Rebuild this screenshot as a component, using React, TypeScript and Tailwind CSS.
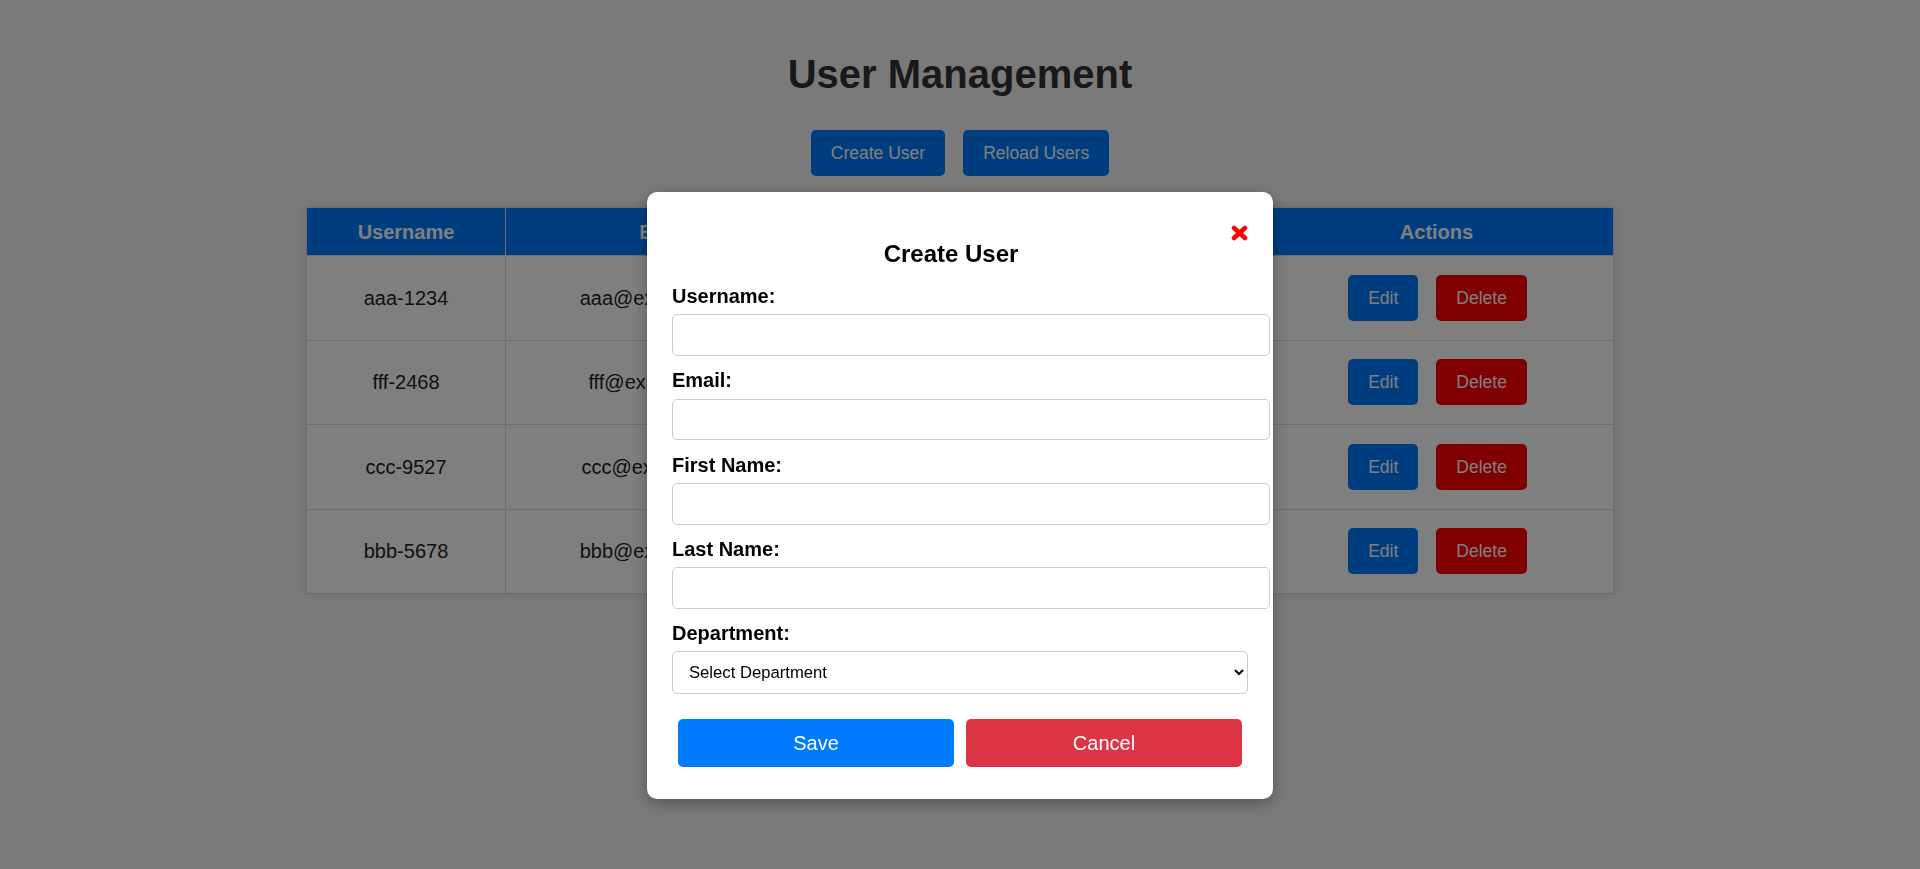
import React from "react";

const users = [
  { username: "aaa-1234", email: "aaa@example.com", first: "Aaa", last: "Smith", dept: "IT" },
  { username: "fff-2468", email: "fff@example.com", first: "Fff", last: "Jones", dept: "HR" },
  { username: "ccc-9527", email: "ccc@example.com", first: "Ccc", last: "Brown", dept: "Sales" },
  { username: "bbb-5678", email: "bbb@example.com", first: "Bbb", last: "Davis", dept: "IT" },
];

function Field({ label }: { label: string }) {
  return (
    <div className="mb-[13.3px]">
      <label className="block text-[20px] leading-[23px] font-bold text-black">{label}</label>
      <input
        type="text"
        className="block mt-[6.4px] h-[41.6px] w-[598px] px-[10px] border border-[#ccc] rounded-[5px] bg-white text-[16.67px]"
      />
    </div>
  );
}

export default function App() {
  return (
    <div className="relative min-h-screen bg-[#f4f4f4] font-['Liberation_Sans',Arial,sans-serif] text-[#333]">
      <div className="pt-[51px] flex flex-col items-center">
        <h1 className="text-[40px] leading-[46px] font-bold text-[#333]">User Management</h1>
        <div className="mt-[33px] flex gap-[18px]">
          <button className="h-[46px] px-[20px] rounded-[5px] bg-[#007bff] text-white text-[17.5px]">
            Create User
          </button>
          <button className="h-[46px] px-[20px] rounded-[5px] bg-[#007bff] text-white text-[17.5px]">
            Reload Users
          </button>
        </div>
        <table className="mt-[31px] w-[1307px] table-fixed border-collapse bg-white shadow-[0_0_10px_rgba(0,0,0,0.1)]">
          <colgroup>
            <col className="w-[199px]" />
            <col className="w-[321px]" />
            <col className="w-[144px]" />
            <col className="w-[144px]" />
            <col className="w-[145px]" />
            <col className="w-[354px]" />
          </colgroup>
          <thead>
            <tr className="h-[48px] bg-[#007bff] text-white text-[20px] font-bold">
              <th className="border border-[#ddd]">Username</th>
              <th className="border border-[#ddd]">Email</th>
              <th className="border border-[#ddd]">First Name</th>
              <th className="border border-[#ddd]">Last Name</th>
              <th className="border border-[#ddd]">Department</th>
              <th className="border border-[#ddd]">Actions</th>
            </tr>
          </thead>
          <tbody>
            {users.map((u) => (
              <tr key={u.username} className="h-[84.5px] text-[20px] text-center text-[#222]">
                <td className="border border-[#ddd]">{u.username}</td>
                <td className="border border-[#ddd]">{u.email}</td>
                <td className="border border-[#ddd]">{u.first}</td>
                <td className="border border-[#ddd]">{u.last}</td>
                <td className="border border-[#ddd]">{u.dept}</td>
                <td className="border border-[#ddd]">
                  <div className="flex justify-center gap-[18px] pl-[2px]">
                    <button className="h-[46px] px-[20px] rounded-[5px] bg-[#007bff] text-white text-[17.5px]">
                      Edit
                    </button>
                    <button className="h-[46px] px-[20px] rounded-[5px] bg-[#ff0000] text-white text-[17.5px]">
                      Delete
                    </button>
                  </div>
                </td>
              </tr>
            ))}
          </tbody>
        </table>
      </div>

      <div className="fixed inset-0 bg-black/50 flex justify-center items-start pt-[192px]">
        <div className="relative w-[626px] bg-white rounded-[10px] p-[25px] pb-[32px] shadow-[0_4px_16px_rgba(0,0,0,0.3)]">
          <button className="absolute right-[25px] top-[33px] w-[17px] h-[16px] flex items-center justify-center">
            <svg width="17" height="16" viewBox="0 0 17 16">
              <path d="M3 3 L14 13 M14 3 L3 13" stroke="#ff0000" strokeWidth="4.5" strokeLinecap="round" />
            </svg>
          </button>
          <h2 className="mt-[23px] pr-[18px] text-center text-[24px] leading-[27.6px] font-bold text-black">
            Create User
          </h2>
          <div className="mt-[17.5px]">
            <Field label="Username:" />
            <Field label="Email:" />
            <Field label="First Name:" />
            <Field label="Last Name:" />
            <div>
              <label className="block text-[20px] leading-[23px] font-bold text-black">Department:</label>
              <select className="block mt-[6px] h-[43px] w-full pl-[12px] pr-[4px] border border-[#ccc] rounded-[5px] bg-white text-[16.67px] text-black">
                <option>Select Department</option>
                <option>IT</option>
                <option>HR</option>
                <option>Sales</option>
              </select>
            </div>
          </div>
          <div className="mt-[25px] flex gap-[12px] px-[6px]">
            <button className="flex-1 h-[47.5px] rounded-[5px] bg-[#007bff] text-white text-[20px]">Save</button>
            <button className="flex-1 h-[47.5px] rounded-[5px] bg-[#dc3545] text-white text-[20px]">Cancel</button>
          </div>
        </div>
      </div>
    </div>
  );
}
